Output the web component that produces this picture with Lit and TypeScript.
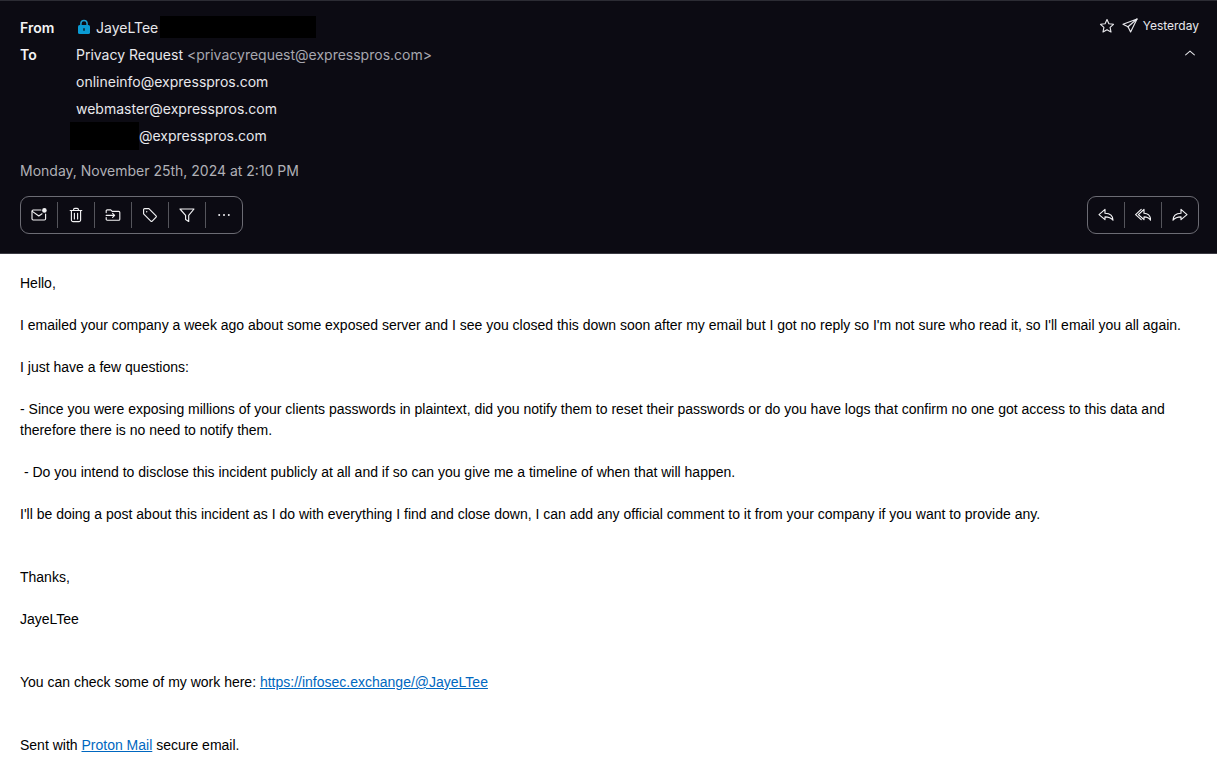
import { LitElement, html, css, svg } from "lit";
import { customElement } from "lit/decorators.js";

const icon = (body: unknown, size = 16) => html`
  <svg class="icon" width=${size} height=${size} viewBox="0 0 16 16" fill="none" stroke="currentColor" stroke-width="1.15" stroke-linecap="round" stroke-linejoin="round">${body}</svg>
`;

const markUnread = svg`
  <path d="M10 3H2.2A1.2 1.2 0 0 0 1 4.2v7.6A1.2 1.2 0 0 0 2.2 13h11.2a1.2 1.2 0 0 0 1.2-1.2V7" />
  <path d="M1.3 4.4 7.8 9 11 6.8" />
  <circle cx="13.4" cy="3.4" r="2.3" fill="currentColor" stroke="none" />
`;
const trash = svg`
  <path d="M2.2 3.5h11.6M5.6 3.5V2.6a1.2 1.2 0 0 1 1.2-1.2h2.4a1.2 1.2 0 0 1 1.2 1.2v.9" />
  <path d="M3.4 3.5v9.4a1.7 1.7 0 0 0 1.7 1.7h5.8a1.7 1.7 0 0 0 1.7-1.7V3.5" />
  <path d="M6.4 6.3v5.6M9.6 6.3v5.6" />
`;
const moveFolder = svg`
  <path d="M1.2 5.6V3.8a1 1 0 0 1 1-1h3.5l1.5 1.6h6.6a1 1 0 0 1 1 1v6.8a1 1 0 0 1-1 1H2.2a1 1 0 0 1-1-1v-1.6" />
  <path d="M1.2 8.4h8.4M7.6 6.4l2 2-2 2" />
`;
const tag = svg`
  <path d="M1.6 2.6a1 1 0 0 1 1-1h4.3l7.2 7.2a1 1 0 0 1 0 1.4l-3.9 3.9a1 1 0 0 1-1.4 0L1.6 6.9Z" />
  <circle cx="4.7" cy="4.7" r=".7" fill="currentColor" stroke="none" />
`;
const filter = svg`
  <path d="M1 2h14L9.7 8.4v6.1L6.6 12.4V8.4Z" />
`;
const more = svg`
  <circle cx="3.2" cy="8" r="1" fill="currentColor" stroke="none" />
  <circle cx="8" cy="8" r="1" fill="currentColor" stroke="none" />
  <circle cx="12.8" cy="8" r="1" fill="currentColor" stroke="none" />
`;
// outlined arrows, closed at the tail like the reference
const reply = svg`
  <path d="M7 2.4 1 7.6l6 5V9.8c3.2 0 5.8.6 8 3.4 0-4.4-3-6.8-8-7Z" />
`;
const replyAll = svg`
  <path d="M9 2.4 3.4 7.6 9 12.6V9.8c2.8 0 5 .6 6.6 3.4 0-4.4-2.2-6.8-6.6-7Z" />
  <path d="M6.2 2.4.6 7.6l5.6 5" />
  <path d="M7.4 3.8 3.4 7.6l4 3.6" stroke-width=".8" />
`;
const forward = svg`
  <path d="M9 2.4l6 5.2-6 5V9.8c-3.2 0-5.8.6-8 3.4 0-4.4 3-6.8 8-7Z" />
`;
const star = svg`
  <path d="M8 1.6 9.9 5.8l4.6.5-3.4 3.1.9 4.6L8 11.7 4 14l.9-4.6-3.4-3.1 4.6-.5Z" />
`;
const send = svg`
  <path d="M15 1 1 6.2l5 2.6L8.6 14Z" />
  <path d="M15 1 6 8.8" />
`;
const chevron = svg`
  <path d="M3 10.2 8 5.8l5 4.4" />
`;

@customElement("app-root")
export class AppRoot extends LitElement {
  static styles = css`
    :host {
      display: block;
      background: #fff;
      height: 767px;
      overflow: hidden;
    }
    .icon {
      display: block;
    }
    .head {
      box-sizing: border-box;
      height: 254px;
      background: #0c0b13;
      border-top: 1px solid #2c2c34;
      border-bottom: 1px solid #3a3a42;
      padding: 12.5px 18px 0 20px;
      font-family: Inter, sans-serif;
      font-size: 14px;
      color: #e8e8ec;
      display: flex;
      flex-direction: column;
    }
    .top {
      display: flex;
      justify-content: space-between;
    }
    .recipients {
      display: grid;
      grid-template-columns: 56px 1fr;
      grid-auto-rows: 27.2px;
      align-items: center;
    }
    .label {
      font-weight: 600;
      color: #f4f4f6;
      padding-top: 1px;
    }
    .from {
      display: flex;
      align-items: center;
    }
    .lock {
      margin-right: 5px;
      margin-left: 1px;
    }
    .redact {
      background: #000;
      display: block;
    }
    .redact-name {
      width: 156px;
      height: 22px;
      margin-left: 2px;
    }
    .redact-local {
      width: 69px;
      height: 28px;
      margin-left: -6px;
    }
    .addr-row {
      display: flex;
      align-items: center;
    }
    .muted {
      color: #a7a7af;
    }
    .side {
      display: flex;
      flex-direction: column;
      align-items: flex-end;
      font-size: 12px;
    }
    .meta {
      display: flex;
      align-items: center;
      height: 24px;
      color: #e8e8ec;
    }
    .meta .icon + .icon {
      margin-left: 7px;
    }
    .meta span {
      margin-left: 5px;
    }
    .collapse {
      margin-top: 8px;
      margin-right: 2px;
    }
    .date {
      color: #b0b0b6;
      margin-top: 12.5px;
      line-height: 17px;
    }
    .bars {
      display: flex;
      justify-content: space-between;
      margin-top: 17px;
    }
    .bar {
      display: flex;
      align-items: center;
      height: 38px;
      box-sizing: border-box;
      border: 1px solid #6c6c74;
      border-radius: 9px;
      color: #f2f2f4;
    }
    .bar button {
      all: unset;
      width: 37px;
      height: 26px;
      display: flex;
      align-items: center;
      justify-content: center;
      border-left: 1px solid #55555c;
      box-sizing: border-box;
    }
    .bar button:first-child {
      border-left: none;
      width: 36px;
    }
    .body {
      padding: 19px 20px 0;
      font-family: "Liberation Sans", Arial, sans-serif;
      font-size: 14px;
      line-height: 21px;
      color: #000;
    }
    .gap {
      height: 21px;
    }
    a {
      color: #0067c0;
    }
  `;

  render() {
    return html`
      <div class="head">
        <div class="top">
          <div class="recipients">
            <div class="label">From</div>
            <div class="from">
              <svg class="icon lock" width="14" height="16" viewBox="0 0 14 16">
                <path d="M3.9 7V4.6a3.1 3.1 0 0 1 6.2 0V7" fill="none" stroke="#1ea0d2" stroke-width="1.5" />
                <rect x="1" y="6" width="12" height="9" rx="1.6" fill="#0a9bd4" />
                <rect x="6" y="9" width="2" height="3" rx="1" fill="#0c3c52" />
              </svg>
              <span>JayeLTee</span>
              <span class="redact redact-name"></span>
            </div>
            <div class="label">To</div>
            <div>Privacy Request <span class="muted">&lt;privacyrequest@expresspros.com&gt;</span></div>
            <div></div>
            <div>onlineinfo@expresspros.com</div>
            <div></div>
            <div>webmaster@expresspros.com</div>
            <div></div>
            <div class="addr-row"><span class="redact redact-local"></span><span>@expresspros.com</span></div>
          </div>
          <div class="side">
            <div class="meta">
              ${icon(star)}${icon(send)}<span>Yesterday</span>
            </div>
            <div class="collapse">${icon(chevron, 14)}</div>
          </div>
        </div>
        <div class="date">Monday, November 25th, 2024 at 2:10 PM</div>
        <div class="bars">
          <div class="bar">
            ${[markUnread, trash, moveFolder, tag, filter, more].map(
              (i) => html`<button>${icon(i)}</button>`
            )}
          </div>
          <div class="bar">
            ${[reply, replyAll, forward].map((i) => html`<button>${icon(i)}</button>`)}
          </div>
        </div>
      </div>
      <div class="body">
        <div>Hello,</div>
        <div class="gap"></div>
        <div>I emailed your company a week ago about some exposed server and I see you closed this down soon after my email but I got no reply so I'm not sure who read it, so I'll email you all again.</div>
        <div class="gap"></div>
        <div>I just have a few questions:</div>
        <div class="gap"></div>
        <div>- Since you were exposing millions of your clients passwords in plaintext, did you notify them to reset their passwords or do you have logs that confirm no one got access to this data and therefore there is no need to notify them.</div>
        <div class="gap"></div>
        <div>&nbsp;- Do you intend to disclose this incident publicly at all and if so can you give me a timeline of when that will happen.</div>
        <div class="gap"></div>
        <div>I'll be doing a post about this incident as I do with everything I find and close down, I can add any official comment to it from your company if you want to provide any.</div>
        <div class="gap"></div>
        <div class="gap"></div>
        <div>Thanks,</div>
        <div class="gap"></div>
        <div>JayeLTee</div>
        <div class="gap"></div>
        <div class="gap"></div>
        <div>You can check some of my work here: <a href="#">https://infosec.exchange/@JayeLTee</a></div>
        <div class="gap"></div>
        <div class="gap"></div>
        <div>Sent with <a href="#">Proton Mail</a> secure email.</div>
      </div>
    `;
  }
}
